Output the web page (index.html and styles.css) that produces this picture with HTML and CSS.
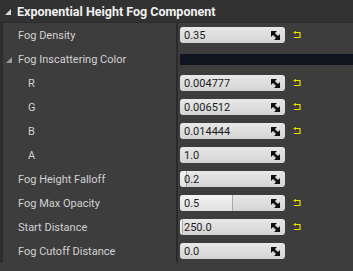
FILE: index.html
```html
<!DOCTYPE html>
<html lang="en">
<head>
<meta charset="UTF-8">
<title>Details</title>
<link rel="stylesheet" href="styles.css">
</head>
<body>
<div class="panel">
  <div class="header">
    <svg class="arrow" width="6" height="6" viewBox="0 0 6 6"><polygon points="6,0 6,6 0,6" fill="#d8d8d8"/></svg>
    Exponential Height Fog Component
  </div>

  <div class="row">
    <div class="name">Fog Density</div>
    <div class="value">
      <div class="spin"><span>0.35</span><svg class="drag" width="9" height="9" viewBox="0 0 9 9"><polygon points="0,0 6,0 0,6" fill="#111"/><polygon points="9,9 3,9 9,3" fill="#111"/><line x1="1.5" y1="1.5" x2="7.5" y2="7.5" stroke="#111" stroke-width="2.6"/></svg></div>
      <svg class="reset" width="8" height="8" viewBox="0 0 8 8"><polygon points="0,1.5 3,0 3,3" fill="#e6e600"/><path d="M3 1.5 H7 V6.5 H1" fill="none" stroke="#e6e600" stroke-width="1.2"/></svg>
    </div>
  </div>

  <div class="row">
    <div class="name">
      <svg class="arrow" width="6" height="6" viewBox="0 0 6 6"><polygon points="6,0 6,6 0,6" fill="#9a9a9a"/></svg>
      Fog Inscattering Color
    </div>
    <div class="value"><div class="swatch"></div></div>
  </div>

  <div class="row">
    <div class="name sub">R</div>
    <div class="value">
      <div class="spin"><span>0.004777</span><svg class="drag" width="9" height="9" viewBox="0 0 9 9"><polygon points="0,0 6,0 0,6" fill="#111"/><polygon points="9,9 3,9 9,3" fill="#111"/><line x1="1.5" y1="1.5" x2="7.5" y2="7.5" stroke="#111" stroke-width="2.6"/></svg></div>
      <svg class="reset" width="8" height="8" viewBox="0 0 8 8"><polygon points="0,1.5 3,0 3,3" fill="#e6e600"/><path d="M3 1.5 H7 V6.5 H1" fill="none" stroke="#e6e600" stroke-width="1.2"/></svg>
    </div>
  </div>

  <div class="row">
    <div class="name sub">G</div>
    <div class="value">
      <div class="spin"><span>0.006512</span><svg class="drag" width="9" height="9" viewBox="0 0 9 9"><polygon points="0,0 6,0 0,6" fill="#111"/><polygon points="9,9 3,9 9,3" fill="#111"/><line x1="1.5" y1="1.5" x2="7.5" y2="7.5" stroke="#111" stroke-width="2.6"/></svg></div>
      <svg class="reset" width="8" height="8" viewBox="0 0 8 8"><polygon points="0,1.5 3,0 3,3" fill="#e6e600"/><path d="M3 1.5 H7 V6.5 H1" fill="none" stroke="#e6e600" stroke-width="1.2"/></svg>
    </div>
  </div>

  <div class="row">
    <div class="name sub">B</div>
    <div class="value">
      <div class="spin"><span>0.014444</span><svg class="drag" width="9" height="9" viewBox="0 0 9 9"><polygon points="0,0 6,0 0,6" fill="#111"/><polygon points="9,9 3,9 9,3" fill="#111"/><line x1="1.5" y1="1.5" x2="7.5" y2="7.5" stroke="#111" stroke-width="2.6"/></svg></div>
      <svg class="reset" width="8" height="8" viewBox="0 0 8 8"><polygon points="0,1.5 3,0 3,3" fill="#e6e600"/><path d="M3 1.5 H7 V6.5 H1" fill="none" stroke="#e6e600" stroke-width="1.2"/></svg>
    </div>
  </div>

  <div class="row">
    <div class="name sub">A</div>
    <div class="value">
      <div class="spin"><span>1.0</span><svg class="drag" width="9" height="9" viewBox="0 0 9 9"><polygon points="0,0 6,0 0,6" fill="#111"/><polygon points="9,9 3,9 9,3" fill="#111"/><line x1="1.5" y1="1.5" x2="7.5" y2="7.5" stroke="#111" stroke-width="2.6"/></svg></div>
    </div>
  </div>

  <div class="row">
    <div class="name">Fog Height Falloff</div>
    <div class="value">
      <div class="spin"><div class="fill" style="width: 6px"></div><span>0.2</span><svg class="drag" width="9" height="9" viewBox="0 0 9 9"><polygon points="0,0 6,0 0,6" fill="#111"/><polygon points="9,9 3,9 9,3" fill="#111"/><line x1="1.5" y1="1.5" x2="7.5" y2="7.5" stroke="#111" stroke-width="2.6"/></svg></div>
    </div>
  </div>

  <div class="row">
    <div class="name">Fog Max Opacity</div>
    <div class="value">
      <div class="spin"><div class="fill" style="width: 52px"></div><span>0.5</span><svg class="drag" width="9" height="9" viewBox="0 0 9 9"><polygon points="0,0 6,0 0,6" fill="#111"/><polygon points="9,9 3,9 9,3" fill="#111"/><line x1="1.5" y1="1.5" x2="7.5" y2="7.5" stroke="#111" stroke-width="2.6"/></svg></div>
      <svg class="reset" width="8" height="8" viewBox="0 0 8 8"><polygon points="0,1.5 3,0 3,3" fill="#e6e600"/><path d="M3 1.5 H7 V6.5 H1" fill="none" stroke="#e6e600" stroke-width="1.2"/></svg>
    </div>
  </div>

  <div class="row">
    <div class="name">Start Distance</div>
    <div class="value">
      <div class="spin"><div class="fill" style="width: 2px"></div><span>250.0</span><svg class="drag" width="9" height="9" viewBox="0 0 9 9"><polygon points="0,0 6,0 0,6" fill="#111"/><polygon points="9,9 3,9 9,3" fill="#111"/><line x1="1.5" y1="1.5" x2="7.5" y2="7.5" stroke="#111" stroke-width="2.6"/></svg></div>
      <svg class="reset" width="8" height="8" viewBox="0 0 8 8"><polygon points="0,1.5 3,0 3,3" fill="#e6e600"/><path d="M3 1.5 H7 V6.5 H1" fill="none" stroke="#e6e600" stroke-width="1.2"/></svg>
    </div>
  </div>

  <div class="row">
    <div class="name">Fog Cutoff Distance</div>
    <div class="value">
      <div class="spin"><span>0.0</span><svg class="drag" width="9" height="9" viewBox="0 0 9 9"><polygon points="0,0 6,0 0,6" fill="#111"/><polygon points="9,9 3,9 9,3" fill="#111"/><line x1="1.5" y1="1.5" x2="7.5" y2="7.5" stroke="#111" stroke-width="2.6"/></svg></div>
    </div>
  </div>
</div>
</body>
</html>
```

FILE: styles.css
```css
body {
  margin: 0;
  background-color: #3d3d3d;
  font-family: Roboto, "Liberation Sans", sans-serif;
  font-size: 11px;
  color: #d2d2d2;
}
.panel {
  width: 353px;
  height: 271px;
  overflow: hidden;
}
.header {
  height: 22px;
  display: flex;
  align-items: center;
  padding-left: 5px;
  background-color: #323232;
  border-bottom: 1px solid #2c2c2c;
  font-size: 12.5px;
  font-weight: bold;
  color: #f0f0f0;
}
.header .arrow {
  margin-right: 6px;
  margin-top: 2px;
}
.row {
  display: flex;
  height: 24px;
  border-left: 3px solid #2e2e2e;
}
.name {
  width: 158px;
  padding-left: 15px;
  display: flex;
  align-items: center;
  white-space: nowrap;
}
.name .arrow {
  margin-left: -12px;
  margin-right: 6px;
  margin-top: 1px;
}
.name.sub {
  padding-left: 25px;
  width: 148px;
}
.value {
  flex: 1;
  display: flex;
  align-items: center;
  border-left: 2px solid #2a2a2a;
  padding-left: 2px;
}
.spin {
  position: relative;
  width: 105px;
  height: 16px;
  box-sizing: border-box;
  display: flex;
  align-items: center;
  padding: 0 5px 0 4px;
  border-radius: 3px;
  background: linear-gradient(#e8e8e8, #d4d4d4);
  color: #1c1c1c;
  overflow: hidden;
}
.spin span {
  flex: 1;
  position: relative;
}
.spin .drag {
  position: relative;
}
.fill {
  position: absolute;
  left: 0;
  top: 0;
  bottom: 0;
  background: linear-gradient(#f4f4f4, #e0e0e0);
  border-right: 1px solid #a8a8a8;
  border-radius: 3px 0 0 3px;
}
.reset {
  margin-left: 8px;
}
.swatch {
  flex: 1;
  height: 11px;
  background-color: #10141e;
}
```
